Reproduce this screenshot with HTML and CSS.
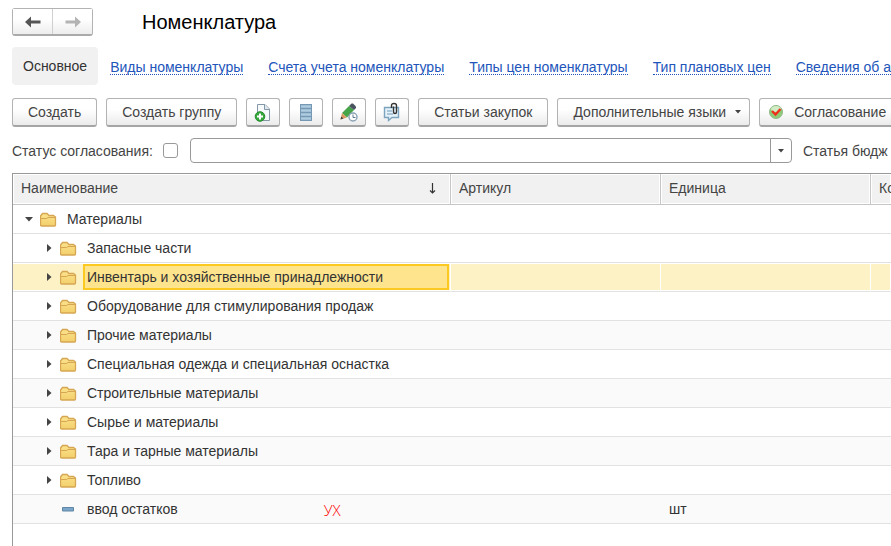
FILE: index.html
```html
<!DOCTYPE html>
<html lang="ru">
<head>
<meta charset="utf-8">
<title>Номенклатура</title>
<link rel="stylesheet" href="styles.css">
</head>
<body>
<svg class="defs" aria-hidden="true">
  <defs>
    <linearGradient id="fg" x1="0" y1="0" x2="0" y2="1"><stop offset="0" stop-color="#fbe38d"/><stop offset="1" stop-color="#f3cf6b"/></linearGradient>
    <symbol id="folder" viewBox="1 -1 18 16">
      <path d="M1.500 13V4L3.500 1.500H8L10 3.500H14.500L16.500 5V13Q16.500 14 15.500 14H2.500Q1.500 14 1.500 13Z" fill="url(#fg)" stroke="#d6a653" stroke-width="1.300"/>
      <path d="M2 6.500H7.500L9 5.500H16" fill="none" stroke="#d6a653"/>
    </symbol>
    <symbol id="closed" viewBox="0 0 6 8"><path d="M1 0L5.500 4L1 8Z" fill="#444"/></symbol>
    <symbol id="open" viewBox="0 0 8 6"><path d="M0 1H8L4 5.500Z" fill="#444"/></symbol>
  </defs>
</svg>
<main>
  <header class="head">
    <div class="history">
      <button type="button" aria-label="Назад"><svg width="16" height="12" viewBox="0 0 16 12"><path d="M0 6L6 .5V4.500H15.500V7.500H6V11.500Z" fill="#555"/></svg></button>
      <button type="button" aria-label="Вперед"><svg width="16" height="12" viewBox="0 0 16 12"><path d="M16 6L10 .5V4.500H.5V7.500H10V11.500Z" fill="#b4b4b4"/></svg></button>
    </div>
    <h1>Номенклатура</h1>
  </header>
  <nav class="tabs">
    <span class="current">Основное</span>
    <a href="#">Виды номенклатуры</a>
    <a href="#">Счета учета номенклатуры</a>
    <a href="#">Типы цен номенклатуры</a>
    <a href="#">Тип плановых цен</a>
    <a href="#">Сведения об а</a>
  </nav>
  <div class="tools">
    <button type="button" class="btn">Создать</button>
    <button type="button" class="btn">Создать группу</button>
    <button type="button" class="btn icon" aria-label="Скопировать"><svg width="20" height="20" viewBox="0 0 20 20"><path d="M4.500 2.500H12L16.500 7V18.500H4.500Z" fill="#f7fafc" stroke="#8497a6"/><path d="M11.500 2.500V7.500H16.500" fill="#dfe8ee" stroke="#8497a6"/><circle cx="7" cy="14.500" r="4.800" fill="#35a83c" stroke="#238b2c"/><path d="M7 11.500V17.500M4 14.500H10" stroke="#fff" stroke-width="2"/></svg></button>
    <button type="button" class="btn icon" aria-label="Список"><svg width="20" height="20" viewBox="0 0 20 20"><path d="M4 2H16V19H4Z" fill="#7599b4"/><path d="M5 4.500H15M5 8.500H15M5 12.500H15M5 16.500H15" stroke="#aecbe0" stroke-width="2.400"/></svg></button>
    <button type="button" class="btn icon" aria-label="История изменений"><svg width="20" height="20" viewBox="0 0 20 20"><path d="M10 4L15 8L8 15.500L3 11Z" fill="#46a449"/><path d="M10 4L12.500 1.500H14L17 4.500V6L15 8Z" fill="#4a5560"/><path d="M3 11L8 15.500L1.500 17.500Z" fill="#d99b63"/><path d="M1.500 17.500L2.200 14.500L4.500 16.500Z" fill="#444"/><circle cx="14" cy="15" r="4" fill="#fff" stroke="#8aa2b5" stroke-width="1.400"/><path d="M14 12.500V15.500H16.500" fill="none" stroke="#5c7890"/></svg></button>
    <button type="button" class="btn icon" aria-label="Обсуждение"><svg width="20" height="20" viewBox="0 0 20 20"><path d="M2.500 5.500H16.500V15.500H10L6.500 18.500V15.500H2.500Z" fill="#e6f2fa" stroke="#7da4bf" stroke-width="1.400"/><path d="M5 9H10M5 12H11" stroke="#6f98b5"/><path d="M9.500 6V3.500Q9.500 1.500 12 1.500Q14.500 1.500 14.500 3.500V10Q14.500 11.500 13 11.500Q11.500 11.500 11.500 10V4.500" fill="none" stroke="#333" stroke-width="1.400"/></svg></button>
    <button type="button" class="btn">Статьи закупок</button>
    <button type="button" class="btn menu">Дополнительные языки <svg width="6" height="4" viewBox="0 0 6 4"><path d="M0 0H6L3 3.500Z" fill="#444"/></svg></button>
    <button type="button" class="btn approve"><svg width="16" height="16" viewBox="0 0 16 16"><circle cx="8" cy="8" r="6.500" fill="#8fcc78" stroke="#8fb987"/><ellipse cx="8" cy="5" rx="5" ry="3" fill="#d2ecc5"/><path d="M4 7L7.500 10.500L12.500 5" fill="none" stroke="#f0301a" stroke-width="2.400"/></svg>Согласование</button>
  </div>
  <form class="filter">
    <label for="use">Статус согласования:</label>
    <input type="checkbox" id="use">
    <div class="combo"><input type="text" aria-label="Статус согласования"><button type="button" aria-label="Выбрать"><svg width="6" height="4" viewBox="0 0 6 4"><path d="M0 0H6L3 3.500Z" fill="#444"/></svg></button></div>
    <span>Статья бюдж</span>
  </form>
  <div class="list">
    <table>
      <colgroup><col class="c-name"><col class="c-art"><col class="c-unit"><col></colgroup>
      <thead><tr>
        <th><div class="sort">Наименование<svg width="7" height="11" viewBox="0 0 7 11"><path d="M3.500 0V10M1 7.500L3.500 10L6 7.500" fill="none" stroke="#333" stroke-width="1.200"/></svg></div></th>
        <th>Артикул</th><th>Единица</th><th>Ко</th>
      </tr></thead>
      <tbody>
        <tr><td><div class="node root"><svg class="tw"><use href="#open"/></svg><svg class="fo"><use href="#folder"/></svg><span>Материалы</span></div></td><td></td><td></td><td></td></tr>
        <tr><td><div class="node"><svg class="tw"><use href="#closed"/></svg><svg class="fo"><use href="#folder"/></svg><span>Запасные части</span></div></td><td></td><td></td><td></td></tr>
        <tr class="selected"><td><div class="node"><svg class="tw"><use href="#closed"/></svg><svg class="fo"><use href="#folder"/></svg><span>Инвентарь и хозяйственные принадлежности</span></div></td><td></td><td></td><td></td></tr>
        <tr><td><div class="node"><svg class="tw"><use href="#closed"/></svg><svg class="fo"><use href="#folder"/></svg><span>Оборудование для стимулирования продаж</span></div></td><td></td><td></td><td></td></tr>
        <tr class="alt"><td><div class="node"><svg class="tw"><use href="#closed"/></svg><svg class="fo"><use href="#folder"/></svg><span>Прочие материалы</span></div></td><td></td><td></td><td></td></tr>
        <tr><td><div class="node"><svg class="tw"><use href="#closed"/></svg><svg class="fo"><use href="#folder"/></svg><span>Специальная одежда и специальная оснастка</span></div></td><td></td><td></td><td></td></tr>
        <tr class="alt"><td><div class="node"><svg class="tw"><use href="#closed"/></svg><svg class="fo"><use href="#folder"/></svg><span>Строительные материалы</span></div></td><td></td><td></td><td></td></tr>
        <tr><td><div class="node"><svg class="tw"><use href="#closed"/></svg><svg class="fo"><use href="#folder"/></svg><span>Сырье и материалы</span></div></td><td></td><td></td><td></td></tr>
        <tr class="alt"><td><div class="node"><svg class="tw"><use href="#closed"/></svg><svg class="fo"><use href="#folder"/></svg><span>Тара и тарные материалы</span></div></td><td></td><td></td><td></td></tr>
        <tr><td><div class="node"><svg class="tw"><use href="#closed"/></svg><svg class="fo"><use href="#folder"/></svg><span>Топливо</span></div></td><td></td><td></td><td></td></tr>
        <tr class="alt"><td><div class="node"><svg class="tw"></svg><svg class="fo" viewBox="1 0 18 16"><path d="M3.500 6.500H14.500V10H3.500Z" fill="#7ba6c9" stroke="#5f86a5"/></svg><span>ввод остатков</span><b class="mark">УХ</b></div></td><td></td><td>шт</td><td></td></tr>
      </tbody>
    </table>
  </div>
</main>
</body>
</html>
```
FILE: styles.css
```css
* { box-sizing: border-box; }
body {
  margin: 0;
  overflow: hidden;
  background: #fff;
  color: #333;
  font: 14px/18px "Liberation Sans", Arial, sans-serif;
}
.defs { position: absolute; width: 0; height: 0; }
main { display: flex; flex-direction: column; min-height: 100vh; padding: 8px 0 0 12px; }
button, input { font: inherit; color: inherit; margin: 0; }
svg { flex: none; display: block; }

.head { display: flex; align-items: center; gap: 49px; height: 28px; }
.history { display: flex; width: 81px; border: 1px solid #b3b3b3; border-bottom: 2px solid #aaa; border-radius: 3px; }
.history button {
  display: flex; align-items: center; justify-content: center;
  flex: 1; height: 25px; padding: 0; border: 0;
  background: linear-gradient(#fff 40%, #ededed);
}
.history button:first-child { border-right: 1px solid #d0d0d0; }
h1 { margin: 0; font-size: 20px; line-height: 24px; font-weight: 400; color: #000; }

.tabs { display: flex; align-items: center; gap: 25px; height: 38px; margin-top: 11px; white-space: nowrap; }
.current { padding: 10px 11px; margin-right: -13px; border-radius: 4px; background: #f1f1f1; color: #333; }
.tabs a { padding-top: 2px; color: #2255bb; text-decoration: none; border-bottom: 1px dotted #2255bb; line-height: 14px; }

.tools { display: flex; gap: 9px; margin-top: 13px; white-space: nowrap; }
.btn {
  display: flex; align-items: center; justify-content: center; flex: none;
  height: 29px; padding: 0 15px;
  border: 1px solid #b3b3b3; border-bottom: 2px solid #a5a5a5; border-radius: 3px;
  background: linear-gradient(#fff 40%, #ebebeb);
  color: #444;
}
.icon { width: 34px; padding: 0; }
.menu { gap: 9px; padding-right: 8px; }
.approve { gap: 10px; padding-left: 8px; }

.filter { display: flex; align-items: center; height: 25px; margin-top: 11px; white-space: nowrap; color: #444; }
.filter input[type="checkbox"] {
  appearance: none; flex: none; width: 15px; height: 15px; margin: 0 12px 0 10px;
  border: 1px solid #999; border-radius: 3px; background: #fff;
}
.combo { display: flex; flex: none; width: 602px; height: 25px; margin-right: 11px; border: 1px solid #999; border-radius: 4px; }
.combo input { flex: 1; min-width: 0; padding: 0 6px; border: 0; background: transparent; outline: 0; }
.combo button { display: flex; align-items: center; justify-content: center; width: 21px; padding: 0; border: 0; border-left: 1px solid #999; background: transparent; }

.list { flex: 1; margin-top: 10px; border-top: 1px solid #999; border-left: 1px solid #999; }
table { width: 100%; table-layout: fixed; border-collapse: separate; border-spacing: 0; }
.c-name { width: 438px; }
.c-art, .c-unit { width: 210px; }
th {
  height: 31px; padding: 0 8px 2px; overflow: hidden; text-align: left; font-weight: 400; color: #444;
  border-right: 1px solid #c6c6c6; border-bottom: 1px solid #c6c6c6;
  background: #f1f1f1; box-shadow: inset 0 0 0 1px #fff;
}
th:last-child { padding-right: 0; border-right: 0; }
.sort { display: flex; align-items: center; justify-content: space-between; padding-right: 6px; }
td { height: 29px; padding: 0 8px; border-bottom: 1px solid #e2e2e2; }
td:first-child { padding: 0 0 0 32px; }
.alt td { background: #fafafa; }
.node { display: flex; align-items: center; height: 28px; padding-right: 1px; }
.root { margin-left: -20px; }
.tw { width: 8px; height: 8px; margin-right: 7px; }
.fo { width: 18px; height: 16px; margin-right: 5px; }
.node span { padding-left: 4px; line-height: 26px; }
.mark { margin-left: 146px; padding-top: 2px; font: 300 15px/20px "Open Sans", "Liberation Sans", sans-serif; color: #f00; }
.selected td { background: #fdf1c6; border-right: 1px solid #fff; box-shadow: inset 0 1px #fff, inset 0 -1px #fff; }
.selected span { flex: 1; padding-left: 2px; line-height: 22px; border: 2px solid #fbc91f; background: #fee48d; }
```
